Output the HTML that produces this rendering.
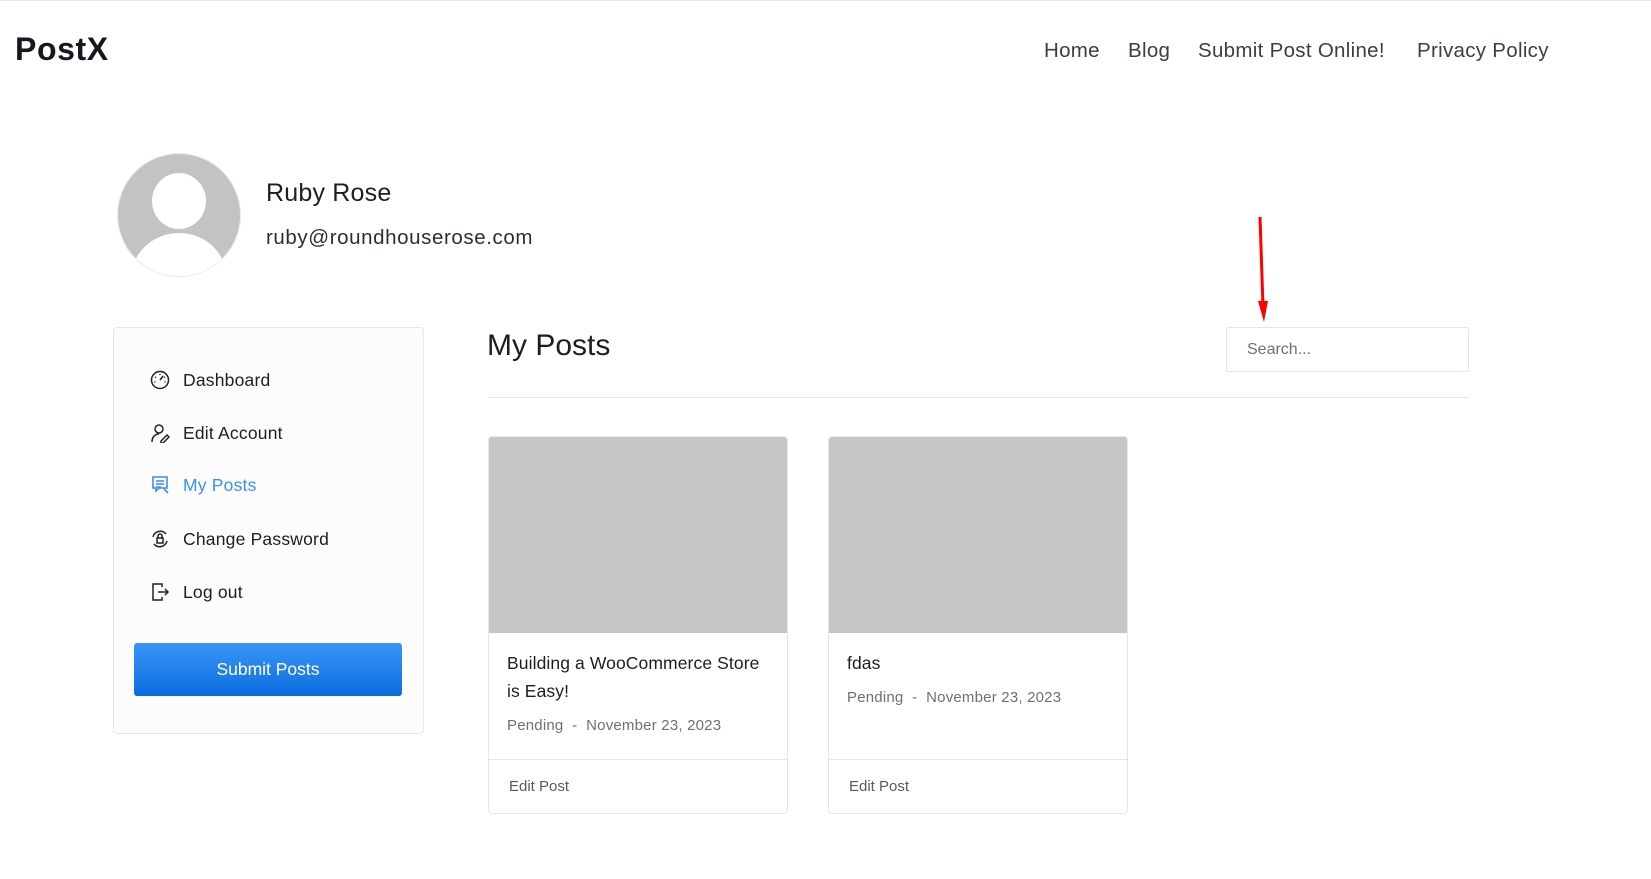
<!DOCTYPE html>
<html><head><meta charset="utf-8"><style>
*{margin:0;padding:0;box-sizing:border-box}
body{width:1651px;height:879px;background:#fff;font-family:"Liberation Sans",sans-serif;position:relative;overflow:hidden;color:#1b1f24;border-top:1px solid #e8e8e8}
.a{position:absolute;white-space:nowrap}
.logo{left:15px;top:30px;font-size:32px;font-weight:bold;color:#15191f;letter-spacing:0.6px}
.nav{top:38px;font-size:20.5px;color:#3a3f47;letter-spacing:0.3px}
.menu{left:183px;font-size:17.5px;color:#1b1f24;letter-spacing:0.2px}
.ic{left:150px;width:20px;height:20px}
.card{position:absolute;top:435px;width:300px;height:378px;border:1px solid #e3e5ea;border-radius:4px;background:#fff;overflow:hidden}
.card .img{height:196px;background:#c6c6c6}
.card .t{position:absolute;left:18px;top:212px;font-size:17.5px;line-height:28px;color:#1b1f24;letter-spacing:0.1px}
.card .m{position:absolute;left:18px;font-size:15px;color:#6b7079;white-space:nowrap;letter-spacing:0.2px}
.card .f{position:absolute;left:0;right:0;top:322px;border-top:1px solid #e3e5ea}
.card .e{position:absolute;left:20px;top:341px;font-size:15px;color:#555a62}
</style></head><body>
<div class="a logo">PostX</div>
<div class="a nav" style="left:1044px">Home</div>
<div class="a nav" style="left:1128px">Blog</div>
<div class="a nav" style="left:1198px">Submit Post Online!</div>
<div class="a nav" style="left:1417px">Privacy Policy</div>

<svg class="a" style="left:117px;top:152px" width="124" height="124" viewBox="0 0 124 124">
<defs><clipPath id="c"><circle cx="62" cy="62" r="62"/></clipPath></defs>
<circle cx="62" cy="62" r="62" fill="#c3c3c3"/>
<g clip-path="url(#c)" fill="#fff"><ellipse cx="62" cy="48" rx="27" ry="28"/><ellipse cx="62" cy="126" rx="48" ry="46"/></g>
<circle cx="62" cy="62" r="61.5" fill="none" stroke="#eee"/>
</svg>
<div class="a" style="left:266px;top:178px;font-size:25px;color:#1b1f24;letter-spacing:0.2px">Ruby Rose</div>
<div class="a" style="left:266px;top:225px;font-size:20.5px;color:#2a2f36;letter-spacing:0.6px">ruby@roundhouserose.com</div>

<div class="a" style="left:113px;top:326px;width:311px;height:407px;background:#fcfcfd;border:1px solid #e5e7eb;border-radius:4px"></div>
<svg class="a ic" style="top:369px" viewBox="0 0 20 20" fill="none" stroke="#222" stroke-width="1.5"><circle cx="10" cy="10" r="8.5"/><path d="M10 10l3-4M5 7l1 .5M10 4v1M15 7l-1 .5M4.5 12h1M14.5 12h1"/></svg>
<div class="a menu" style="top:369px">Dashboard</div>
<svg class="a ic" style="top:422px" viewBox="0 0 20 20" fill="none" stroke="#222" stroke-width="1.5"><circle cx="9" cy="6" r="4"/><path d="M2 19c0-5 3-8 7-8M11 18l6-6 2 2-6 6h-2z"/></svg>
<div class="a menu" style="top:422px">Edit Account</div>
<svg class="a ic" style="top:474px" viewBox="0 0 20 20" fill="none" stroke="#3b8ff0" stroke-width="1.6"><path d="M3 2h14v11H9l-3 3v-3H3z"/><path d="M6 6h8M6 9h8M6 12h5M14 14l4 4"/></svg>
<div class="a menu" style="top:474px;color:#3b8ff0">My Posts</div>
<svg class="a ic" style="top:528px" viewBox="0 0 20 20" fill="none" stroke="#222" stroke-width="1.5"><path d="M3 8a7.5 7.5 0 0 1 13-3M17 12a7.5 7.5 0 0 1-13 3"/><rect x="7" y="9" width="6" height="5"/><path d="M8 9V7a2 2 0 0 1 4 0v2"/></svg>
<div class="a menu" style="top:528px">Change Password</div>
<svg class="a ic" style="top:581px" viewBox="0 0 20 20" fill="none" stroke="#222" stroke-width="1.5"><path d="M12 5V2H3v16h9v-3M8 10h10M15 7l3 3-3 3"/></svg>
<div class="a menu" style="top:581px">Log out</div>
<div class="a" style="left:134px;top:642px;width:268px;height:53px;border-radius:3px;background:linear-gradient(#3a95f6,#0a6ddf);color:#fff;font-size:17.5px;text-align:center;line-height:53px">Submit Posts</div>

<div class="a" style="left:487px;top:328px;font-size:30px;color:#1b1f24">My Posts</div>
<div class="a" style="left:1226px;top:326px;width:243px;height:45px;border:1px solid #e3e5ea;border-radius:2px;padding-left:20px;line-height:43px;font-size:16px;color:#6b7079">Search...</div>
<div class="a" style="left:488px;top:396px;width:981px;height:1px;background:#e3e5ea"></div>

<svg class="a" style="left:1250px;top:212px" width="24" height="114" viewBox="0 0 24 114"><path d="M10 4L13 94" stroke="#f00" stroke-width="3"/><path d="M8 88l10 0-4 21z" fill="#f00"/></svg>

<div class="card" style="left:488px"><div class="img"></div><div class="t">Building a WooCommerce Store<br>is Easy!</div><div class="m" style="top:280px">Pending &nbsp;-&nbsp; November 23, 2023</div><div class="f"></div><div class="e">Edit Post</div></div>
<div class="card" style="left:828px"><div class="img"></div><div class="t">fdas</div><div class="m" style="top:252px">Pending &nbsp;-&nbsp; November 23, 2023</div><div class="f"></div><div class="e">Edit Post</div></div>
</body></html>
